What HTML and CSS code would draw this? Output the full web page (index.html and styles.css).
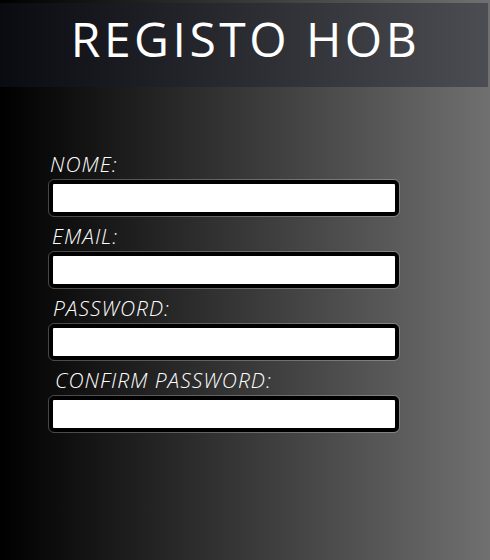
FILE: index.html
```html
<!DOCTYPE html>
<html lang="pt">
<head>
<meta charset="utf-8">
<title>Registo HOB</title>
<link rel="stylesheet" href="styles.css">
</head>
<body>
<header class="topbar">
  <h1 class="title">REGISTO HOB</h1>
</header>
<form class="form">
  <div class="field">
    <label class="label label-1" for="nome">NOME:</label>
    <input class="input" id="nome" type="text">
  </div>
  <div class="field">
    <label class="label label-2" for="email">EMAIL:</label>
    <input class="input" id="email" type="email">
  </div>
  <div class="field">
    <label class="label label-3" for="pw">PASSWORD:</label>
    <input class="input" id="pw" type="password">
  </div>
  <div class="field">
    <label class="label label-4" for="pw2">CONFIRM PASSWORD:</label>
    <input class="input" id="pw2" type="password">
  </div>
</form>
</body>
</html>
```
FILE: styles.css
```css
html, body {
  margin: 0;
  padding: 0;
  height: 100%;
}
body {
  background: linear-gradient(to right, #000000 0%, #707070 100%);
  font-family: "Open Sans", "Liberation Sans", sans-serif;
  color: #ffffff;
  padding-top: 3px;
  box-sizing: border-box;
}
.topbar {
  height: 84px;
  margin-right: 2px;
  background: linear-gradient(to right, #090b10 0%, #4b4d52 100%);
  display: flex;
  align-items: flex-start;
  justify-content: center;
}
.title {
  margin: 0;
  padding-top: 4px;
  padding-left: 3px;
  font-weight: 400;
  font-size: 48px;
  line-height: 64px;
  letter-spacing: 3.5px;
  color: #ffffff;
}
.form {
  display: flex;
  flex-direction: column;
  gap: 8px;
  margin-top: 65px;
  padding-left: 49px;
  width: 350px;
}
.field {
  display: flex;
  flex-direction: column;
  gap: 4px;
}
.label {
  font-style: italic;
  font-weight: 300;
  font-size: 21px;
  line-height: 24px;
  letter-spacing: 1px;
  color: #ffffff;
}
.label-1 { padding-left: 1px; }
.label-2 { padding-left: 3px; }
.label-3 { padding-left: 4px; }
.label-4 { padding-left: 6px; }
.input {
  box-sizing: border-box;
  width: 350px;
  height: 36px;
  margin: 0;
  border: 4px solid #000000;
  border-radius: 5px;
  background: #ffffff;
  outline: 1px solid rgba(255,255,255,0.25);
  outline-offset: 0;
  padding: 0 6px;
}
```
